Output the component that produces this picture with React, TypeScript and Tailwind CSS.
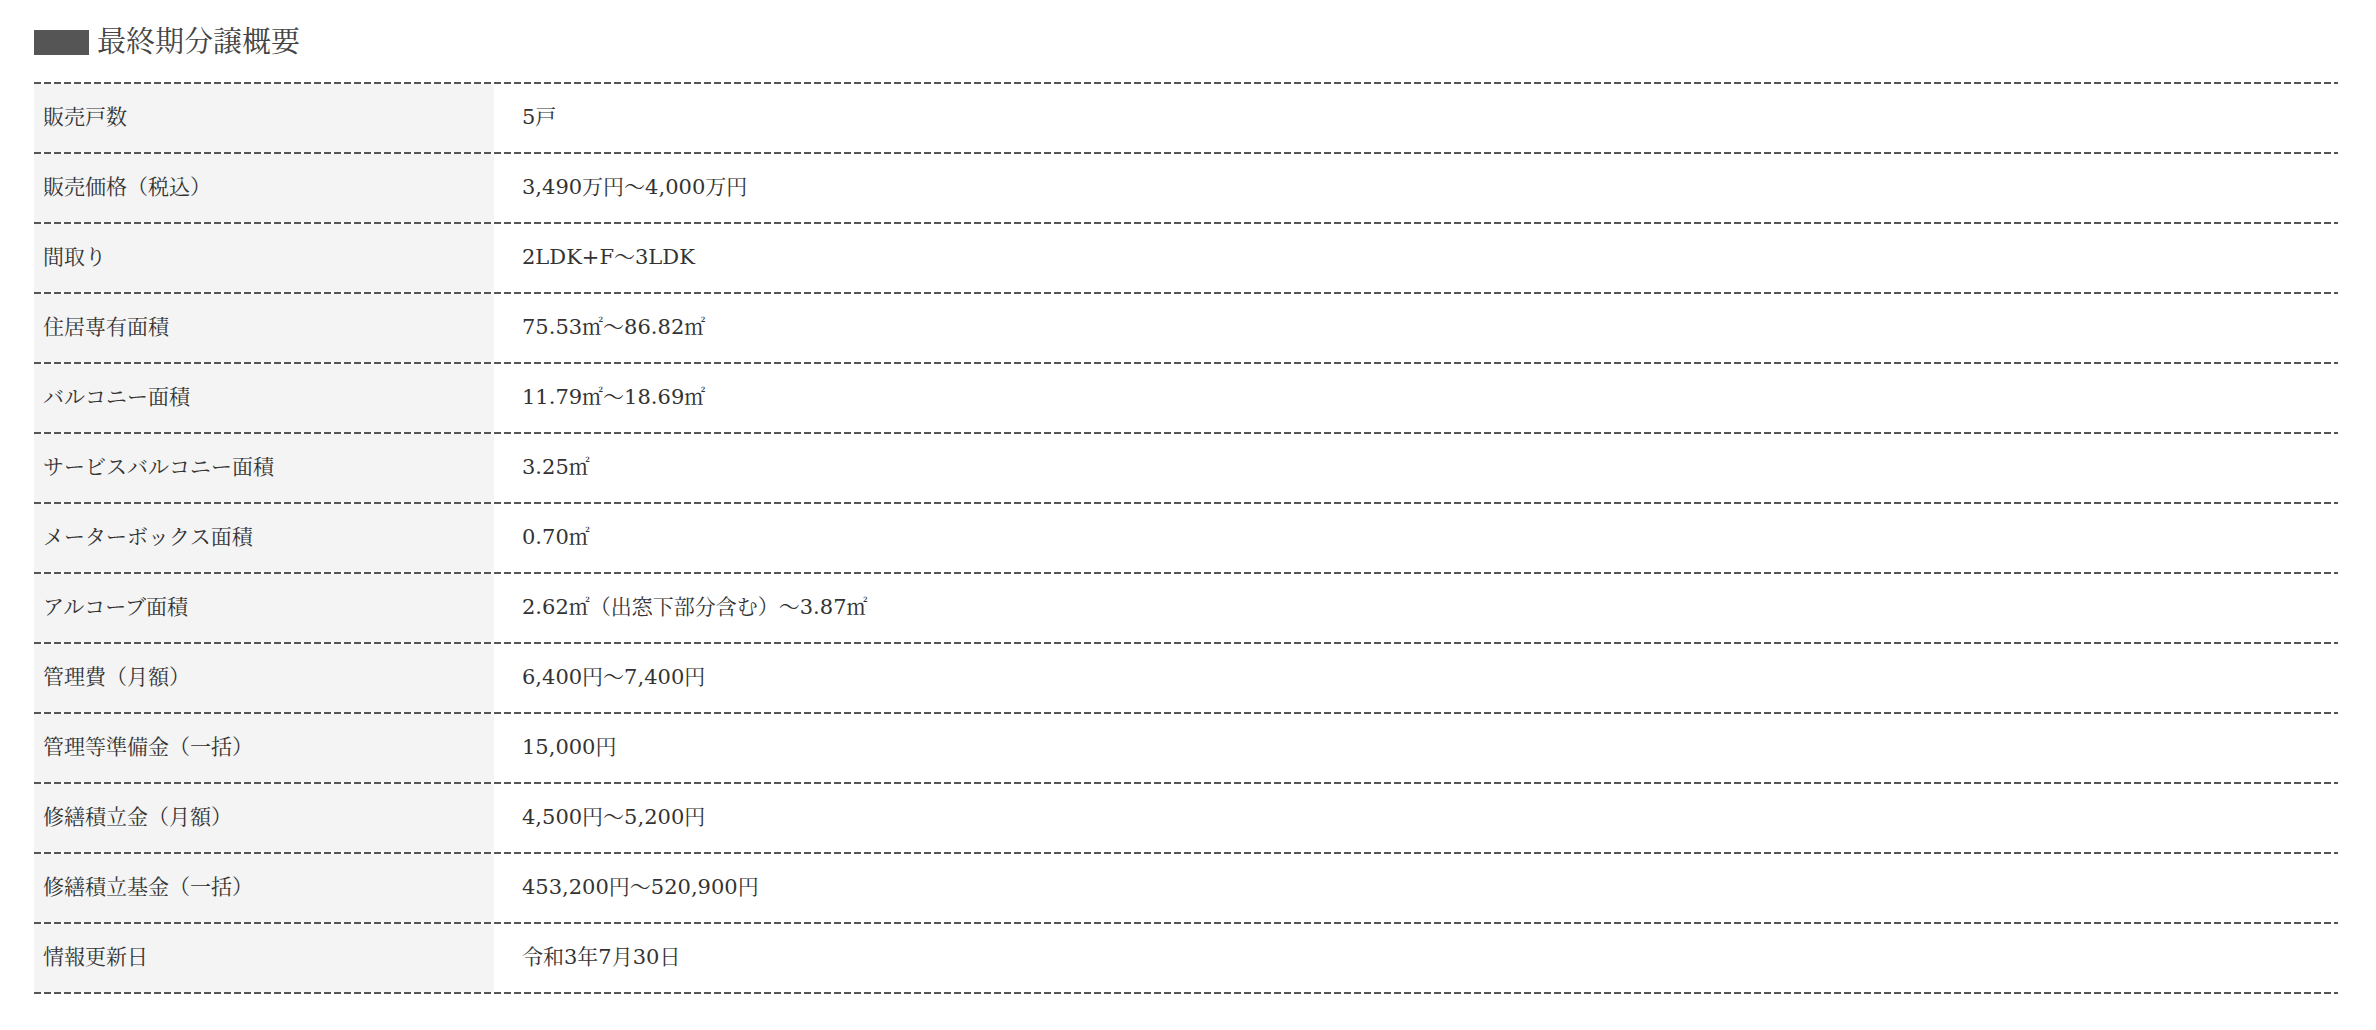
import React from "react";

const rows: [string, string][] = [
  ["販売戸数", "5戸"],
  ["販売価格（税込）", "3,490万円〜4,000万円"],
  ["間取り", "2LDK+F〜3LDK"],
  ["住居専有面積", "75.53㎡〜86.82㎡"],
  ["バルコニー面積", "11.79㎡〜18.69㎡"],
  ["サービスバルコニー面積", "3.25㎡"],
  ["メーターボックス面積", "0.70㎡"],
  ["アルコーブ面積", "2.62㎡（出窓下部分含む）〜3.87㎡"],
  ["管理費（月額）", "6,400円〜7,400円"],
  ["管理等準備金（一括）", "15,000円"],
  ["修繕積立金（月額）", "4,500円〜5,200円"],
  ["修繕積立基金（一括）", "453,200円〜520,900円"],
  ["情報更新日", "令和3年7月30日"],
];

function Dash() {
  return (
    <div className="h-[2px] w-full bg-[repeating-linear-gradient(90deg,#555555_0_7px,transparent_7px_10px)]" />
  );
}

export default function App() {
  return (
    <div
      className="w-[2376px] h-[1030px] bg-white pl-[34px] pr-[38px] pt-[27px] text-[#333333]"
      style={{ fontFamily: '"DejaVu Serif", "Noto Serif CJK JP", "Noto Sans CJK JP", serif' }}
    >
      <div className="flex items-center h-[30px] gap-[8px] mb-[25px]">
        <div className="w-[55px] h-[25px] bg-[#555555]" />
        <h2 className="text-[29px] leading-[30px] text-[#444444] font-normal">最終期分譲概要</h2>
      </div>
      <div className="flex flex-col">
        <Dash />
        {rows.map(([k, v]) => (
          <React.Fragment key={k}>
            <div className="flex h-[68px]">
              <div className="w-[460px] shrink-0 bg-[#f4f4f4] pl-[9px] flex items-center text-[21px]">
                {k}
              </div>
              <div className="flex-1 pl-[28px] flex items-center text-[21px]">{v}</div>
            </div>
            <Dash />
          </React.Fragment>
        ))}
      </div>
    </div>
  );
}
